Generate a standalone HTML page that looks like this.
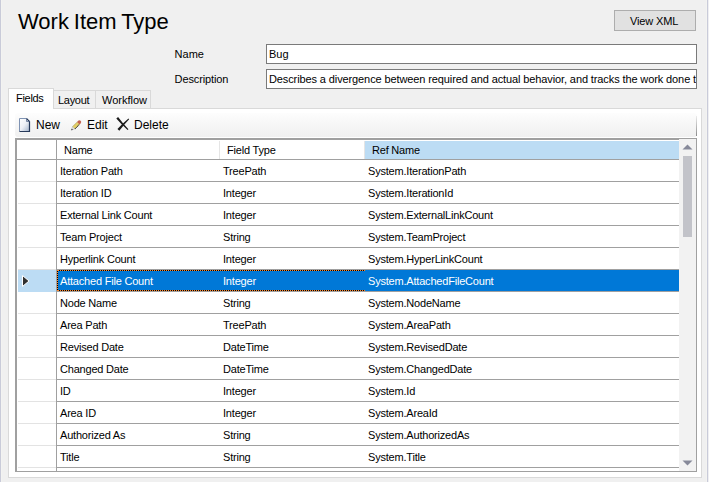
<!DOCTYPE html>
<html><head><meta charset="utf-8">
<style>
*{margin:0;padding:0;box-sizing:border-box}
html,body{width:709px;height:482px;overflow:hidden;background:#f0f0f0}
body{position:relative;font-family:"Liberation Sans",sans-serif;font-size:11px;color:#000}
.a{position:absolute}
.t{position:absolute;white-space:nowrap;line-height:1}
.g{position:absolute;white-space:nowrap;line-height:1;letter-spacing:-0.2px}
.w{color:#fff}
.ts{position:absolute;white-space:nowrap;line-height:1;font-size:12px}
</style></head><body>
<div class="a" style="left:0;top:0;width:1px;height:482px;background:#c9cbd9"></div>
<div class="a" style="left:1px;top:0;width:1px;height:482px;background:#f3f3f1"></div>
<div class="a" style="left:706px;top:0;width:1px;height:482px;background:#f3f3f1"></div>
<div class="a" style="left:707px;top:0;width:1px;height:482px;background:#c9cbd9"></div>
<div class="a" style="left:708px;top:0;width:1px;height:482px;background:#efeff2"></div>

<div class="t" style="left:18px;top:11px;font-size:22px;letter-spacing:0px;word-spacing:-1.2px">Work Item Type</div>

<div class="a" style="left:614px;top:10px;width:82px;height:21px;background:#e1e1e1;border:1px solid #adadad"></div>
<div class="t" style="left:630px;top:16px;letter-spacing:-0.15px">View XML</div>

<div class="t" style="left:174.6px;top:49px">Name</div>
<div class="t" style="left:174.6px;top:74px;letter-spacing:-0.13px">Description</div>

<div class="a" style="left:266px;top:44px;width:431px;height:20px;background:#fff;border:1px solid #7a7a7a"></div>
<div class="t" style="left:269px;top:49px">Bug</div>
<div class="a" style="left:266px;top:69px;width:431px;height:20px;background:#fff;border:1px solid #7a7a7a;overflow:hidden">
  <div class="t" style="left:2px;top:4px;letter-spacing:-0.11px">Describes a divergence between required and actual behavior, and tracks the work done to correct the defect and verify the correction.</div>
</div>

<div class="a" style="left:8px;top:108px;width:694px;height:370px;background:#fff;border:1px solid #d9d9d9"></div>
<div class="a" style="left:53px;top:90px;width:43px;height:18px;background:#f0f0f0;border:1px solid #d9d9d9;border-bottom:none"></div>
<div class="a" style="left:95px;top:90px;width:56px;height:18px;background:#f0f0f0;border:1px solid #d9d9d9;border-bottom:none"></div>
<div class="a" style="left:8px;top:88px;width:46px;height:21px;background:#fff;border:1px solid #d9d9d9;border-bottom:none"></div>
<div class="t" style="left:16px;top:93px;letter-spacing:-0.3px">Fields</div>
<div class="t" style="left:58px;top:95px;letter-spacing:-0.3px">Layout</div>
<div class="t" style="left:102px;top:95px">Workflow</div>

<div class="a" style="left:15px;top:113px;width:682px;height:24px;border-radius:3px;background:linear-gradient(#fdfdfd,#f0f0f0)"></div>
<div class="a" style="left:696px;top:116px;width:1px;height:20px;background:linear-gradient(#ececec,#8c8c8c)"></div>
<svg class="a" style="left:18px;top:117px" width="14" height="16">
<defs><linearGradient id="pg" x1="0" y1="0" x2="1" y2="1"><stop offset="0" stop-color="#ffffff"/><stop offset="0.5" stop-color="#eef1f6"/><stop offset="1" stop-color="#9fb0c8"/></linearGradient></defs>
<path d="M1.5 1.5 H8.5 L11.5 4.5 V14.5 H1.5 Z" fill="url(#pg)"/>
<path d="M1.5 14.5 V1.5 H8.5" fill="none" stroke="#7f93b3" stroke-width="1"/>
<path d="M8.5 1.5 L11.5 4.5 V14.5 H1.5" fill="none" stroke="#273a5a" stroke-width="1.2"/>
<path d="M8.5 1.5 V4.5 H11.5" fill="none" stroke="#5d7090" stroke-width="0.8"/>
</svg>
<svg class="a" style="left:69px;top:118px" width="16" height="16">
<g transform="translate(2.3 12.2) rotate(-45) scale(0.88 0.8)">
<path d="M0 0 L4 -2 L4 2 Z" fill="#e6e6e6" stroke="#888" stroke-width="0.4"/>
<path d="M0 0 L1.6 -0.8 L1.6 0.8 Z" fill="#000"/>
<rect x="4" y="-2" width="7.5" height="4" fill="#e3cf66"/>
<path d="M4 2 H11.5" stroke="#202020" stroke-width="1.1" stroke-dasharray="1.2 0.6"/>
<path d="M4 -2 H11.5" stroke="#8a7a30" stroke-width="0.5"/>
<path d="M11.3 -2.2 H13 Q15 -2.2 15 0 Q15 2.2 13 2.2 H11.3 Z" fill="#c4614f"/>
</g>
</svg>
<svg class="a" style="left:114px;top:115px" width="18" height="18">
<path d="M2.31 3.61 Q7.49 9.71 13.56 15.01 L14.44 14.19 Q8.82 8.50 4.09 1.99 Z" fill="#1c1c1c"/>
<path d="M14.44 3.46 Q8.58 8.39 3.45 14.01 L5.35 15.79 Q9.89 9.62 15.16 4.14 Z" fill="#1c1c1c"/>
</svg>

<div class="ts" style="left:36px;top:119px">New</div>
<div class="ts" style="left:87px;top:119px">Edit</div>
<div class="ts" style="left:134px;top:119px">Delete</div>

<div class="a" style="left:15px;top:138px;width:682px;height:334px;background:#fff;border-left:2px solid #a0a0a0;border-top:2px solid #a0a0a0;border-right:1px solid #a0a0a0;border-bottom:1px solid #a0a0a0"></div>
<div class="a" style="left:17px;top:140px;width:679px;height:331px;overflow:hidden">
<div class="a" style="left:-17px;top:-140px;width:709px;height:482px">
<div class="a" style="left:17px;top:159px;width:662px;height:1px;background:#a0a0a0"></div>
<div class="a" style="left:56px;top:140px;width:1px;height:331px;background:#a0a0a0"></div>
<div class="a" style="left:219px;top:141px;width:1px;height:18px;background:#e5e5e5"></div>
<div class="a" style="left:364px;top:141px;width:1px;height:18px;background:#e5e5e5"></div>
<div class="a" style="left:365px;top:141px;width:314px;height:18px;background:#bcdcf4"></div>
<div class="g" style="left:64px;top:145px">Name</div>
<div class="g" style="left:227px;top:145px">Field Type</div>
<div class="g" style="left:372px;top:145px">Ref Name</div>
<div class="a" style="left:57px;top:181px;width:622px;height:1px;background:#a0a0a0"></div>
<div class="a" style="left:18px;top:181px;width:38px;height:1px;background:#e3e3e3"></div>
<div class="a" style="left:57px;top:203px;width:622px;height:1px;background:#a0a0a0"></div>
<div class="a" style="left:18px;top:203px;width:38px;height:1px;background:#e3e3e3"></div>
<div class="a" style="left:57px;top:225px;width:622px;height:1px;background:#a0a0a0"></div>
<div class="a" style="left:18px;top:225px;width:38px;height:1px;background:#e3e3e3"></div>
<div class="a" style="left:57px;top:247px;width:622px;height:1px;background:#a0a0a0"></div>
<div class="a" style="left:18px;top:247px;width:38px;height:1px;background:#e3e3e3"></div>
<div class="a" style="left:57px;top:269px;width:622px;height:1px;background:#a0a0a0"></div>
<div class="a" style="left:18px;top:269px;width:38px;height:1px;background:#e3e3e3"></div>
<div class="a" style="left:57px;top:291px;width:622px;height:1px;background:#a0a0a0"></div>
<div class="a" style="left:18px;top:291px;width:38px;height:1px;background:#e3e3e3"></div>
<div class="a" style="left:57px;top:313px;width:622px;height:1px;background:#a0a0a0"></div>
<div class="a" style="left:18px;top:313px;width:38px;height:1px;background:#e3e3e3"></div>
<div class="a" style="left:57px;top:335px;width:622px;height:1px;background:#a0a0a0"></div>
<div class="a" style="left:18px;top:335px;width:38px;height:1px;background:#e3e3e3"></div>
<div class="a" style="left:57px;top:357px;width:622px;height:1px;background:#a0a0a0"></div>
<div class="a" style="left:18px;top:357px;width:38px;height:1px;background:#e3e3e3"></div>
<div class="a" style="left:57px;top:379px;width:622px;height:1px;background:#a0a0a0"></div>
<div class="a" style="left:18px;top:379px;width:38px;height:1px;background:#e3e3e3"></div>
<div class="a" style="left:57px;top:401px;width:622px;height:1px;background:#a0a0a0"></div>
<div class="a" style="left:18px;top:401px;width:38px;height:1px;background:#e3e3e3"></div>
<div class="a" style="left:57px;top:423px;width:622px;height:1px;background:#a0a0a0"></div>
<div class="a" style="left:18px;top:423px;width:38px;height:1px;background:#e3e3e3"></div>
<div class="a" style="left:57px;top:445px;width:622px;height:1px;background:#a0a0a0"></div>
<div class="a" style="left:18px;top:445px;width:38px;height:1px;background:#e3e3e3"></div>
<div class="a" style="left:57px;top:467px;width:622px;height:1px;background:#a0a0a0"></div>
<div class="a" style="left:18px;top:467px;width:38px;height:1px;background:#e3e3e3"></div>
<div class="g" style="left:60px;top:166px">Iteration Path</div>
<div class="g" style="left:223px;top:166px">TreePath</div>
<div class="g" style="left:368px;top:166px">System.IterationPath</div>
<div class="g" style="left:60px;top:188px">Iteration ID</div>
<div class="g" style="left:223px;top:188px">Integer</div>
<div class="g" style="left:368px;top:188px">System.IterationId</div>
<div class="g" style="left:60px;top:210px">External Link Count</div>
<div class="g" style="left:223px;top:210px">Integer</div>
<div class="g" style="left:368px;top:210px">System.ExternalLinkCount</div>
<div class="g" style="left:60px;top:232px">Team Project</div>
<div class="g" style="left:223px;top:232px">String</div>
<div class="g" style="left:368px;top:232px">System.TeamProject</div>
<div class="g" style="left:60px;top:254px">Hyperlink Count</div>
<div class="g" style="left:223px;top:254px">Integer</div>
<div class="g" style="left:368px;top:254px">System.HyperLinkCount</div>
<div class="a" style="left:18px;top:270px;width:38px;height:22px;background:#bcdcf4"></div>
<div class="a" style="left:57px;top:270px;width:622px;height:21px;background:#0078d7"></div>
<div class="a" style="left:57px;top:270px;width:308px;height:21px;border:1px solid #000;border-right:none"></div>
<div class="a" style="left:57px;top:270px;width:308px;height:21px;border:1px dotted #ff8728;border-right:none"></div>
<svg class="a" style="left:21px;top:275px" width="10" height="12"><path d="M1.5 0.5 L1.5 11.5 L8 6 Z" fill="#303030" stroke="#fff" stroke-width="1"/></svg>
<div class="g w" style="left:60px;top:276px">Attached File Count</div>
<div class="g w" style="left:223px;top:276px">Integer</div>
<div class="g w" style="left:368px;top:276px">System.AttachedFileCount</div>
<div class="g" style="left:60px;top:298px">Node Name</div>
<div class="g" style="left:223px;top:298px">String</div>
<div class="g" style="left:368px;top:298px">System.NodeName</div>
<div class="g" style="left:60px;top:320px">Area Path</div>
<div class="g" style="left:223px;top:320px">TreePath</div>
<div class="g" style="left:368px;top:320px">System.AreaPath</div>
<div class="g" style="left:60px;top:342px">Revised Date</div>
<div class="g" style="left:223px;top:342px">DateTime</div>
<div class="g" style="left:368px;top:342px">System.RevisedDate</div>
<div class="g" style="left:60px;top:364px">Changed Date</div>
<div class="g" style="left:223px;top:364px">DateTime</div>
<div class="g" style="left:368px;top:364px">System.ChangedDate</div>
<div class="g" style="left:60px;top:386px">ID</div>
<div class="g" style="left:223px;top:386px">Integer</div>
<div class="g" style="left:368px;top:386px">System.Id</div>
<div class="g" style="left:60px;top:408px">Area ID</div>
<div class="g" style="left:223px;top:408px">Integer</div>
<div class="g" style="left:368px;top:408px">System.AreaId</div>
<div class="g" style="left:60px;top:430px">Authorized As</div>
<div class="g" style="left:223px;top:430px">String</div>
<div class="g" style="left:368px;top:430px">System.AuthorizedAs</div>
<div class="g" style="left:60px;top:452px">Title</div>
<div class="g" style="left:223px;top:452px">String</div>
<div class="g" style="left:368px;top:452px">System.Title</div>
</div></div>
<div class="a" style="left:679px;top:139px;width:17px;height:332px;background:#f2f2f2"></div>
<svg class="a" style="left:679px;top:140px" width="17" height="331">
<path d="M3.5 9.5 L8.5 4.5 L13.5 9.5 Z" fill="#868999"/>
<rect x="4" y="16" width="9" height="81" fill="#c2c3c9"/>
<path d="M3.5 320.5 L8.5 325.5 L13.5 320.5 Z" fill="#868999"/>
</svg>
</body></html>
